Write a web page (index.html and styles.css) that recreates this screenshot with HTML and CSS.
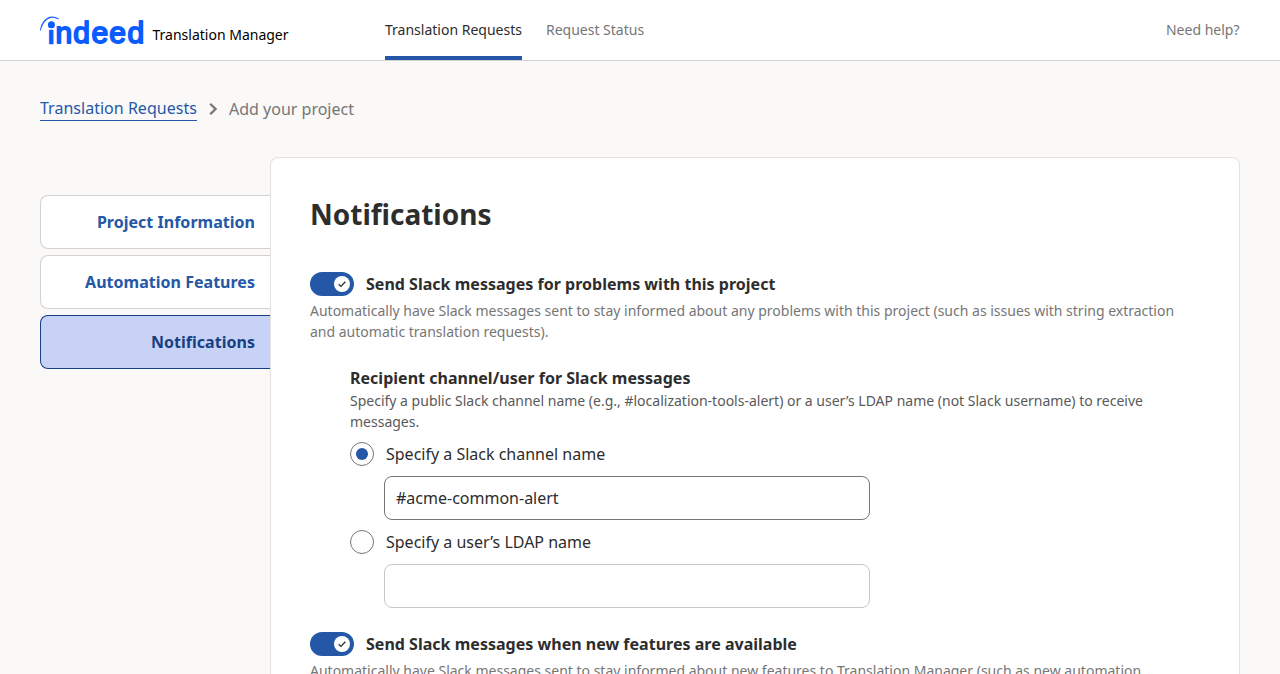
FILE: index.html
```html
<!DOCTYPE html>
<html lang="en">
<head>
<meta charset="utf-8">
<title>Translation Manager</title>
<link rel="stylesheet" href="styles.css">
</head>
<body>
<header class="header">
  <a class="brand">
    <svg class="logo" width="105" height="32" viewBox="0 0 105 32">
      <path class="logo-fill" d="M0 15.5C1 5 10-2.5 18.8 3.6C19.2 4.2 18.8 4.400 18.3 4.200C10-.2 3.500 5 .8 15.300C.6 16 0 16 0 15.500Z"/>
      <circle class="logo-fill" cx="11.400" cy="9.700" r="3.500"/>
      <text class="logo-text" y="28.300"><tspan class="logo-i" x="7.400" y="29.100">i</tspan><tspan x="15.500 33.200 51.400 69.300 87.500" y="28.300">ndeed</tspan></text>
    </svg>
    <span class="product">Translation Manager</span>
  </a>
  <nav class="nav">
    <a class="nav-link nav-active">Translation Requests</a>
    <a class="nav-link">Request Status</a>
  </nav>
  <a class="help">Need help?</a>
</header>
<div class="breadcrumbs">
  <a class="crumb-link">Translation Requests</a>
  <svg class="chevron" width="8" height="14" viewBox="0 0 8 14"><path d="M1.200 1.700L6.500 7L1.200 12.300"/></svg>
  <span class="crumb">Add your project</span>
</div>
<div class="layout">
  <aside class="tabs">
    <a class="tab">Project Information</a>
    <a class="tab">Automation Features</a>
    <a class="tab tab-active">Notifications</a>
  </aside>
  <main class="panel">
    <h1 class="title">Notifications</h1>
    <section class="setting">
      <div class="switch-row">
        <span class="switch"><span class="knob"><svg width="16" height="16" viewBox="0 0 16 16"><path d="M4.700 8.300L7 10.400L11.300 5.800"/></svg></span></span>
        <span class="switch-label">Send Slack messages for problems with this project</span>
      </div>
      <p class="description">Automatically have Slack messages sent to stay informed about any problems with this project (such as issues with string extraction and automatic translation requests).</p>
      <div class="recipient">
        <h2 class="subtitle">Recipient channel/user for Slack messages</h2>
        <p class="hint">Specify a public Slack channel name (e.g., #localization-tools-alert) or a user’s LDAP name (not Slack username) to receive messages.</p>
        <div class="radio-row"><span class="radio radio-on"></span>Specify a Slack channel name</div>
        <div class="field">#acme-common-alert</div>
        <div class="radio-row"><span class="radio"></span>Specify a user’s LDAP name</div>
        <div class="field field-off"></div>
      </div>
    </section>
    <section class="setting">
      <div class="switch-row">
        <span class="switch"><span class="knob"><svg width="16" height="16" viewBox="0 0 16 16"><path d="M4.700 8.300L7 10.400L11.300 5.800"/></svg></span></span>
        <span class="switch-label">Send Slack messages when new features are available</span>
      </div>
      <p class="description">Automatically have Slack messages sent to stay informed about new features to Translation Manager (such as new automation</p>
    </section>
  </main>
</div>
</body>
</html>
```
FILE: styles.css
```css
* { box-sizing: border-box; }
body {
  margin: 0;
  height: 674px;
  overflow: hidden;
  background: #faf9f8;
  color: #2d2d2d;
  font: 16px/24px "Noto Sans", sans-serif;
}
h1, h2, p { margin: 0; }
.header {
  display: flex;
  height: 61px;
  padding: 0 40px;
  background: #fff;
  border-bottom: 1px solid #d4d2d0;
  font-size: 14px;
  line-height: 21px;
}
.brand { display: flex; width: 345px; padding-top: 15px; }
.logo { flex: none; overflow: visible; }
.logo-fill { fill: #0a5cff; }
.logo-text {
  fill: #0a5cff;
  stroke: #0a5cff;
  stroke-width: 1.8;
  stroke-linejoin: round;
  font: 30px "Liberation Sans", sans-serif;
}
.logo-i { font-size: 26px; font-weight: 700; stroke-width: .7; }
.product { margin: 9px 0 0 7.5px; color: #000; white-space: nowrap; }
.nav { display: flex; gap: 24px; }
.nav-link { height: 60px; padding-top: 19px; color: #767676; }
.nav-active { color: #2d2d2d; border-bottom: 4px solid #2557a7; }
.help { margin: 19px .5px 0 auto; color: #767676; }
.breadcrumbs {
  display: flex;
  align-items: center;
  height: 96px;
  padding: 0 40px;
  color: #767676;
}
.crumb-link { width: 157px; height: 25px; margin-bottom: 2px; border-bottom: 1px solid #2557a7; color: #2557a7; letter-spacing: .02px; }
.chevron { margin: 0 12px; fill: none; stroke: #767676; stroke-width: 2.3; }
.layout { display: flex; padding: 0 40px; }
.tabs {
  display: flex;
  flex-direction: column;
  gap: 6px;
  width: 230px;
  padding-top: 38px;
}
.tab {
  height: 54px;
  padding: 14px 15px 0 0;
  background: #fff;
  border: 1px solid #d4d2d0;
  border-right: 0;
  border-radius: 8px 0 0 8px;
  color: #2557a7;
  font-weight: 700;
  letter-spacing: .02px;
  text-align: right;
}
.tab-active { background: #c8d2f6; border-color: #164081; color: #164081; }
.panel {
  flex: 1;
  height: 517px;
  padding: 37px 39px 0;
  background: #fff;
  border: 1px solid #e4e2e0;
  border-bottom: 0;
  border-radius: 8px 8px 0 0;
}
.title { font-size: 28px; line-height: 38px; }
.setting { padding-top: 39px; }
.setting + .setting { padding-top: 24px; }
.switch-row { display: flex; align-items: center; height: 24px; gap: 12px; }
.switch {
  display: flex;
  justify-content: flex-end;
  width: 44px;
  height: 24px;
  padding: 4px;
  background: #2557a7;
  border-radius: 12px;
}
.knob { width: 16px; height: 16px; background: #fff; border-radius: 50%; }
.knob svg { display: block; fill: none; stroke: #2d2d2d; stroke-width: 1.3; }
.switch-label { font-weight: 700; letter-spacing: .015px; }
.description { padding-top: 4px; color: #767676; font-size: 14px; line-height: 21px; }
.recipient { padding: 24px 0 0 40px; }
.subtitle { font-size: 16px; line-height: 24px; letter-spacing: .015px; }
.hint { color: #595959; font-size: 14px; line-height: 21px; }
.radio-row { display: flex; align-items: center; gap: 12px; height: 44px; }
.radio {
  display: flex;
  align-items: center;
  justify-content: center;
  width: 24px;
  height: 24px;
  border: 1px solid #767676;
  border-radius: 50%;
}
.radio-on::after { content: ""; width: 12px; height: 12px; background: #2557a7; border-radius: 50%; }
.field {
  width: 486px;
  height: 44px;
  margin-left: 34px;
  padding: 9px 11px;
  border: 1px solid #767676;
  border-radius: 8px;
}
.field-off { border-color: #c8c8c8; }
```
